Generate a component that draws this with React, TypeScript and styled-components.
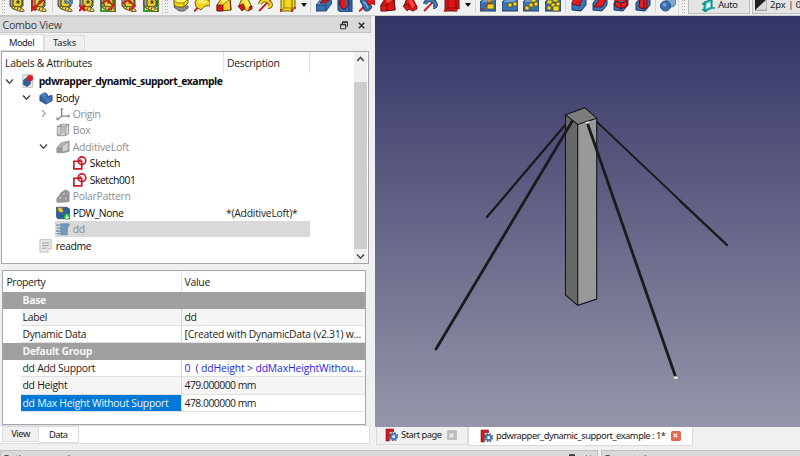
import React from 'react';
import styled, { createGlobalStyle, css } from 'styled-components';

const GlobalStyle = createGlobalStyle`
  * { box-sizing: border-box; }
  body { margin: 0; overflow: hidden; background: #f0f0f0; }
  svg { flex: none; }
`;

/* ---------- shared ---------- */
const Window = styled.div`
  width: 800px;
  height: 456px;
  display: flex;
  flex-direction: column;
  overflow: hidden;
  background: #f0f0f0;
  color: #1c1c24;
  font: 10.4px/16px 'Open Sans', 'Noto Sans', sans-serif;
  white-space: pre;
`;
const Label = styled.span<{ $ls?: number; $bold?: boolean; $color?: string; $size?: number }>`
  letter-spacing: ${(p) => p.$ls ?? -0.26}px;
  font-weight: ${(p) => (p.$bold ? 700 : 400)};
  ${(p) => p.$color && css`color: ${p.$color};`}
  ${(p) => p.$size && css`font-size: ${p.$size}px;`}
`;
const TabLabel = styled(Label)`
  font-family: 'Noto Sans', sans-serif;
  font-size: 9.4px;
  letter-spacing: ${(p) => p.$ls ?? -0.5}px;
`;

/* ---------- toolbar ---------- */
const Toolbar = styled.div`
  flex: none;
  height: 16px;
  display: flex;
  align-items: flex-start;
  overflow: hidden;
  border-bottom: 1px solid #c9c9cc;
  background: #f1f1f1;
`;
const ToolSlot = styled.div`
  flex: none;
  width: 21.4px;
  height: 16px;
  margin-top: -4px;
  display: flex;
  justify-content: center;
`;
const Separator = styled.div<{ $w: number }>`
  flex: none;
  width: ${(p) => p.$w}px;
  height: 13px;
  display: flex;
  justify-content: center;
  &::before { content: ''; width: 1px; background: #d4d4d4; }
`;
const Handle = styled.div<{ $w: number; $first?: boolean }>`
  flex: none;
  width: ${(p) => p.$w}px;
  height: 15px;
  display: flex;
  justify-content: center;
  gap: 1px;
  border-left: ${(p) => (p.$first ? 0 : 1)}px solid #dadada;
  &::before, &::after { content: ''; width: 1px; background: repeating-linear-gradient(#aaa 0 1px, transparent 1px 3px); }
`;
const Arrow = styled.div`
  flex: none;
  width: 10px;
  height: 12px;
  padding: 3px 0 0 2px;
  &::before { content: ''; display: block; width: 0; border: 3px solid transparent; border-top: 4px solid #111; border-bottom: 0; }
`;
const ToolButton = styled.div<{ $w: number }>`
  flex: none;
  width: ${(p) => p.$w}px;
  height: 14px;
  margin-right: 2px;
  display: flex;
  align-items: center;
  gap: 3px;
  padding: 0 0 3px 2px;
  border: 1px solid #bdbdbd;
  border-top: 0;
  background: #e4e4e4;
`;

type IconProps = { main: string; lite: string; dark: string };
const YELLOW = { main: '#f3d51f', lite: '#fff06a', dark: '#5e4d08' };
const RED = { main: '#df1414', lite: '#ff4a3a', dark: '#4a0b10' };
const S = ({ children, w = 16 }: { children: React.ReactNode; w?: number }) => (
  <svg width={w} height={w} viewBox="0 0 16 16">{children}</svg>
);

const Tape = ({ kind }: { kind: string }) => (
  <S>
    {(kind === 'box' || kind === 'toggle') && <path d="M1 0v15h14V0" fill="none" stroke="#3f9a2c" strokeWidth="2.2" />}
    <path d="M1 3 4 0h7l3 3v7l-3 3H5l-4-3z" fill="#a09f94" stroke="#3b3a26" strokeWidth=".9" />
    <path d="M4 4 7 1h4l2 4v4l-3 2H6L4 9z" fill="#e9cf2b" stroke="#3a3610" strokeWidth=".9" />
    <circle cx="9" cy="6" r="1.7" fill="#4b4832" />
    <path d="m3 10 8 1 4 3v1.500h-4l-8-3z" fill="#e8d04a" stroke="#4c461c" strokeWidth=".8" />
    <path d="m6 11-1 2m4-1.500-1 2.500m4-1.500-1 2" stroke="#37330f" strokeWidth=".8" />
    {kind === 'angle' && <path d="M1 0v14L13 3M1 13l4 1" fill="none" stroke="#cc1a14" strokeWidth="2" />}
    {kind === 'refresh' && <path d="M8 3c1 5 6 5 7 0v4l-3 1" fill="none" stroke="#4c83c4" strokeWidth="2.2" />}
    {kind === 'clear' && <path d="m0 9 6 6m0-6-6 6" stroke="#d0131a" strokeWidth="2.2" />}
    {(kind === 'toggle' || kind === 'delta') && <path d="m1 8 6-4 7 6-5 4" fill="none" stroke="#d41c18" strokeWidth="1.8" />}
  </S>
);
const Pad = () => (
  <S>
    <path d="m1 11 5 4h5l4-3v-2H1z" fill="#8e9294" stroke="#454a4c" strokeWidth=".8" />
    <path d="m1 4 4-3h10v6l-4 4H4L1 9z" fill="#f3d51f" stroke="#655109" strokeWidth=".9" />
    <path d="m1 5 3 2h7l4-4M11 7v4" fill="none" stroke="#8f760d" strokeWidth=".8" />
    <path d="m2 4 3-2h9l-3 4H5z" fill="#fff06a" />
  </S>
);
const Revolve = () => (
  <S>
    <path d="m0 15.500 5-5M12 5l4-4" stroke="#d21b18" strokeWidth="1.8" />
    <path d="M1 6c3-4 6-5 9-4l6 3v5c-4-1-7 1-9 4L2 11z" fill="#f3d51f" stroke="#655109" strokeWidth=".9" />
    <path d="m3 6 4-3 7 3-5 2z" fill="#fff06a" />
  </S>
);
const Loft = ({ main, lite, dark }: IconProps) => (
  <S>
    <path d="M1 9 5 3l9-2 1 13-8 .7H1z" fill={main} stroke={dark} strokeWidth="1" />
    <path d="m6 4 8-2-2 4-5 1z" fill={lite} />
    <path d="M1 9h6v6H1zM14 3l1 11" fill="#dc1817" stroke="#68100c" strokeWidth=".8" />
    <path d="m7 9 7-6" stroke={dark} strokeWidth=".7" />
  </S>
);
const Sweep = ({ main, lite, dark }: IconProps) => (
  <S>
    <path d="M2 10 5 2l5-1 5 10-4 4-6-3z" fill={main} stroke={dark} strokeWidth=".9" />
    <path d="m6 3 3-1 4 8-3 2z" fill={lite} />
    <path d="m1 10 5-2 2 4-3 3zM12 11l3-1v3l-4 2" fill="#d71918" stroke="#65110d" strokeWidth=".8" />
  </S>
);
const Helix = ({ main, dark }: IconProps) => (
  <S>
    <path d="m1 15 14-14" stroke="#d21a18" strokeWidth="1.8" />
    <path d="M2 8c1-4 6-5 9-2 3 2 2 5-1 5M6 5c0-4 5-5 8-2" fill="none" stroke={dark} strokeWidth="4" />
    <path d="M2 8c1-4 6-5 9-2 3 2 2 5-1 5M6 5c0-4 5-5 8-2" fill="none" stroke={main} strokeWidth="2.5" />
  </S>
);
const Prim = ({ main, lite, dark }: IconProps) => (
  <S>
    <path d="m1 3 4-3h10v12l-3 3H1z" fill={main} stroke={dark} strokeWidth=".9" />
    <path d="m2 3 3-3h9l-2 3z" fill={lite} />
    <path d="M12 3v12m0-12 3-3" fill="none" stroke={dark} strokeWidth=".8" />
    <path d="M4 0v12m0 0-3 3m3-3h11" stroke={dark} strokeWidth=".6" />
    <path d="M0 13h2v3H0zM11 13h2v3h-2zM14 11h2v2h-2z" fill="#d62b21" />
  </S>
);
const Pocket = () => (
  <S>
    <path d="m0 9 6-7h10v5l-6 8H0z" fill="#3970b0" stroke="#173b67" strokeWidth=".9" />
    <path d="m0 9 6-7h10l-5 7z" fill="#5a92cf" />
    <path d="m4 7 3-3h6l-3 3z" fill="#e21717" stroke="#541019" strokeWidth=".8" />
    <path d="M0 9h10l6-7M10 9v6" fill="none" stroke="#173b67" strokeWidth=".8" />
  </S>
);
const Hole = () => (
  <S>
    <path d="M1 0h12l2 2v14H3l-2-2z" fill="#346eb0" stroke="#163b67" strokeWidth="1" />
    <path d="M12 0v15" stroke="#173b67" />
    <ellipse cx="7" cy="7" rx="4.3" ry="6" fill="#e21717" stroke="#4b1220" />
    <path d="M7 2c3 3 3 7 0 10 5-1 5-9 0-10" fill="#426fa5" />
  </S>
);
const Groove = () => (
  <S>
    <path d="m0 15.500 5-5" stroke="#d51919" strokeWidth="1.8" />
    <path d="M1 5c3-2 7-2 9 1l3 5c-2 4-5 5-8 3-1-4-2-6-4-9z" fill="#346eb0" stroke="#173b67" strokeWidth=".9" />
    <path d="M6 3c3-4 9-3 10 1v5c-3-2-5-1-7 1 0-3-1-5-3-7z" fill="#e51b1b" stroke="#681015" strokeWidth=".7" />
    <path d="M4 6c3 1 4 3 5 6" fill="none" stroke="#84acd7" strokeWidth="1.4" />
  </S>
);
const Pattern = ({ n }: { n: number }) => (
  <S>
    <path d="m0 6 5-4h11v13H0z" fill="#3a72b2" stroke="#193f6d" />
    <path d="m1 6 4-3h10l-3 3z" fill="#72a2d4" />
    {n === 0 && <path d="M7 8h7v5H7zM8 3h4v4H8z" fill="#f3d522" stroke="#59500f" strokeWidth=".8" />}
    {n === 0 && <path d="m2 14 12-12M1 13h3" stroke="#d41c18" strokeDasharray="3 2" strokeWidth="1.4" />}
    {n > 0 && <g fill="#f3d522" stroke="#554b0d" strokeWidth=".7"><rect x="6" y="7" width="4" height="4" rx="1" /><rect x="11" y="6" width="4" height="4" rx="1" /></g>}
    {n > 1 && <g fill="#f3d522" stroke="#554b0d" strokeWidth=".7"><rect x="2" y="10" width="4" height="4" rx="1" /><rect x="8" y="2" width="5" height="4" rx="1" /></g>}
    {n > 2 && <g fill="#f3d522" stroke="#554b0d" strokeWidth=".7"><rect x="8" y="10" width="6" height="5" rx="1" /><rect x="2" y="4" width="5" height="4" rx="1" /></g>}
  </S>
);
const Dress = ({ n }: { n: number }) => (
  <S>
    <path d="m1 7 5-6h9v8l-5 6-9-1z" fill="#3a72b2" stroke="#183b68" />
    {n === 0 && <path d="M1 8c0-4 3-7 6-7l8 1c-4 1-6 4-6 8z" fill="#e51c1b" stroke="#5b101c" strokeWidth=".8" />}
    {n === 1 && <path d="m2 11 6-9h7l-5 9z" fill="#e51c1b" stroke="#5b101c" strokeWidth=".8" />}
    {n === 2 && <path d="m2 4 4-2 8 2v6l-6 3-6-3zM2 5l6 2 6-2M8 7v6" fill="#e51c1b" stroke="#5b101c" />}
    {n === 3 && <path d="M5 2h7v10l-4 1-4-2zM9 2v10" fill="#e51c1b" stroke="#5b101c" />}
  </S>
);
const Bool = () => (
  <S>
    <circle cx="11" cy="6" r="5" fill="#7fa9d4" stroke="#527da9" />
    <circle cx="5.5" cy="10" r="5" fill="#3a70ae" stroke="#244b7d" />
    <circle cx="4.5" cy="8.8" r="2" fill="#6e9dcd" />
  </S>
);

const tools: React.ReactNode[] = [
  <Tape kind="plain" />, <Tape kind="angle" />, 5, <Tape kind="refresh" />, <Tape kind="clear" />,
  <Tape kind="toggle" />, <Tape kind="delta" />, <Tape kind="box" />, 'handle',
  <Pad />, <Revolve />, <Loft {...YELLOW} />, <Sweep {...YELLOW} />, <Helix {...YELLOW} />, <Prim {...YELLOW} />, 'arrow', 4.8,
  <Pocket />, <Hole />, <Groove />, <Loft {...RED} />, <Sweep {...RED} />, <Helix main="#4379b5" lite="#8db4dd" dark="#193c67" />, <Prim {...RED} />, 'arrow', 4.6,
  <Pattern n={0} />, <Pattern n={1} />, <Pattern n={2} />, <Pattern n={3} />, 4.6,
  <Dress n={0} />, <Dress n={1} />, <Dress n={2} />, <Dress n={3} />, 3.6, <Bool />,
];

/* ---------- docks ---------- */
const Main = styled.div`
  flex: none;
  height: 434px;
  display: flex;
`;
const Dock = styled.div`
  flex: none;
  width: 371px;
  display: flex;
  flex-direction: column;
`;
const DockTitle = styled.div`
  flex: none;
  height: 17px;
  display: flex;
  align-items: center;
  padding: 1px 5px 0 2.5px;
  border: 1px solid #c6c6c6;
  border-left: 0;
  background: #d9d9d9;
`;
const Spacer = styled.div`
  flex: 1;
`;
const TitleIcons = styled.div`
  display: flex;
  gap: 10px;
  align-items: center;
`;
const TopTabs = styled.div`
  flex: none;
  height: 18px;
  display: flex;
  align-items: flex-end;
`;
const Tab = styled.div<{ $w: number; $on?: boolean; $h: number }>`
  flex: none;
  width: ${(p) => p.$w}px;
  height: ${(p) => p.$h}px;
  display: flex;
  align-items: center;
  justify-content: center;
  background: ${(p) => (p.$on ? '#fff' : '#f0f0f0')};
  border: 1px solid #dcdcdc;
  border-left-width: ${(p) => (p.$on ? 0 : 1)}px;
`;
const Tree = styled.div`
  flex: none;
  width: 368px;
  height: 213px;
  margin-left: 1px;
  display: flex;
  padding-right: 1px;
  border: 1px solid #a5a5b0;
  background: #fff;
`;
const TreeBody = styled.div`
  flex: 1;
  min-width: 0;
`;
const TreeHead = styled.div`
  height: 20.8px;
  display: flex;
  line-height: 22px;
`;
const HeadCell = styled.div<{ $w: number; $pad: number }>`
  flex: none;
  width: ${(p) => p.$w}px;
  padding-left: ${(p) => p.$pad}px;
  border-right: 1px solid #e2e2e2;
`;
const TreeRow = styled.div<{ $depth: number }>`
  height: 16.48px;
  display: flex;
  align-items: center;
  padding-left: ${(p) => 2 + p.$depth * 17}px;
`;
const Chevron = styled.div`
  flex: none;
  width: 17px;
  display: flex;
  padding-left: 1px;
`;
const RowContent = styled.div<{ $sel?: boolean }>`
  flex: 1;
  height: 100%;
  display: flex;
  align-items: center;
  gap: 3px;
  padding-left: 0.7px;
  margin-right: 44px;
  background: ${(p) => (p.$sel ? '#d9d9d9' : 'transparent')};
`;
const Note = styled.div`
  width: 84px;
  margin-left: auto;
`;
const ScrollBar = styled.div`
  flex: none;
  width: 13px;
  display: flex;
  flex-direction: column;
  background: #f0f0f0;
`;
const ScrollEnd = styled.div<{ $h: number }>`
  height: ${(p) => p.$h}px;
  display: flex;
  justify-content: center;
  padding-top: 3px;
`;
const Thumb = styled.div`
  flex: 1;
  background: #cdcdcd;
`;
const Grid = styled.div`
  flex: none;
  width: 364px;
  height: 155px;
  margin: 6px 0 0 2px;
  border: 1px solid #a5a5b0;
  background: #fff;
`;
const GridHead = styled.div`
  height: 21px;
  display: flex;
  line-height: 22px;
`;
const GroupRow = styled.div`
  height: 17.1px;
  padding-left: 19.5px;
  background: #a0a0a0;
`;
const PropRow = styled.div<{ $alt?: boolean }>`
  height: 17.1px;
  margin-left: 17.5px;
  display: flex;
  border-bottom: 1px solid #e0e0e0;
  background: ${(p) => (p.$alt ? '#f5f5f5' : '#fff')};
`;
const PropName = styled.div<{ $sel?: boolean }>`
  flex: none;
  width: 161.5px;
  padding-left: 2px;
  border-right: 1px solid #d8d8d8;
  ${(p) => p.$sel && css`background: #0078d7; color: #eaf5ff;`}
`;
const PropValue = styled.div`
  padding-left: 2.5px;
`;
const BottomTabs = styled.div`
  flex: none;
  width: 370px;
  height: 19px;
  display: flex;
  padding-left: 2px;
  border: 1px solid #dedede;
  border-left: 0;
  background: #fff;
`;
const Center = styled.div`
  flex: 1;
  margin-left: 4px;
  display: flex;
  flex-direction: column;
`;
const View3D = styled.div`
  flex: none;
  height: 411px;
  background: linear-gradient(#333366, #9696aa);
`;
const DocTabs = styled.div`
  display: flex;
  padding-left: 1px;
`;
const DocTab = styled.div<{ $w: number; $on?: boolean }>`
  width: ${(p) => p.$w}px;
  height: ${(p) => (p.$on ? 18.5 : 17.5)}px;
  display: flex;
  align-items: center;
  gap: 3px;
  padding-left: ${(p) => (p.$on ? 11 : 8)}px;
  border: 1px solid #dadada;
  border-top: 0;
  background: ${(p) => (p.$on ? '#fff' : '#f0f0f0')};
`;
const CloseBox = styled.div<{ $bg: string }>`
  flex: none;
  width: 10px;
  height: 10px;
  margin-left: 2px;
  display: flex;
  align-items: center;
  justify-content: center;
  border-radius: 1.5px;
  background: ${(p) => p.$bg};
`;
const BottomDocks = styled.div`
  flex: none;
  height: 6px;
  display: flex;
  gap: 3px;
  overflow: hidden;
`;
const BottomDock = styled.div<{ $w: number }>`
  flex: none;
  width: ${(p) => p.$w}px;
  height: 17px;
  display: flex;
  padding: 0 5px 0 2.5px;
  border: 1px solid #c2c2c2;
  background: #d9d9d9;
`;

/* ---------- small drawings ---------- */
const FloatIcon = () => (
  <svg width="8" height="9" viewBox="0 0 8 9"><path d="M2.5 3V1.2h5v4H6M.6 3.6h5v4.2h-5z" fill="none" stroke="#333" /><path d="M.2 3.6h5.8M2.2 1h5.6" stroke="#333" strokeWidth="1.5" /></svg>
);
const CrossIcon = ({ c = '#333', s = 7 }: { c?: string; s?: number }) => (
  <svg width={s} height={s} viewBox="0 0 7 7"><path d="m.8.8 5.4 5.4m0-5.4L.8 6.2" stroke={c} strokeWidth="1.6" /></svg>
);
const Chev = ({ dir }: { dir: 'down' | 'right' | 'up' }) => (
  <svg width="9" height="9" viewBox="0 0 9 9">
    <path d={dir === 'down' ? 'm1 2.6 3.5 3.6L8 2.6' : dir === 'up' ? 'm1.2 6 3.3-3.6L7.8 6' : 'M3 1l3.4 3.5L3 8'} fill="none" stroke={dir === 'right' ? '#a3a3a3' : '#484848'} strokeWidth={dir === 'right' ? 1.1 : 1.5} />
  </svg>
);
const Fc = () => (
  <svg width="13" height="14" viewBox="0 0 13 14">
    <path d="M1 1h7.5v2.8H4.3V6h2.5v2.5H4.3V13H1z" fill="#d21b20" stroke="#7d1116" strokeWidth=".6" />
    <circle cx="8.7" cy="8.7" r="3.6" fill="none" stroke="#34618f" strokeWidth="1.8" strokeDasharray="1.6 1.23" />
    <circle cx="8.7" cy="8.7" r="2.4" fill="none" stroke="#4a7db5" strokeWidth="2" />
    <circle cx="8.7" cy="8.7" r="1.1" fill="#f1f4f8" />
  </svg>
);
const treeIcons: Record<string, React.ReactNode> = {
  doc: <><path d="M.8.8h11.500v14.4H.8z" fill="#e9e9e6" stroke="#bdbdbd" /><path d="m1.800 7 3.2-2.500 4.500 1v6l-3.700 2.700-4-2z" fill="#2d609d" stroke="#1b3e6b" strokeWidth=".7" /><circle cx="9" cy="4.800" r="3.600" fill="#d8202b" /></>,
  body: <><path d="m1 5 5-3 3 1 1 3 5-1v6l-7 4-7-4z" fill="#2f659f" stroke="#1b406c" strokeWidth=".8" /><path d="m1 5 5-3 3 2-4 3z" fill="#5085bf" /><path d="m5 7 4-1v3l5-3v5l-6 4V10L5 9z" fill="#4679b2" /></>,
  origin: <><path d="M6.5 1v9.5L1 14.5m5.5-4H16" fill="none" stroke="#858585" strokeWidth="1.5" /><path d="m4.8 3.2 1.7-2 1.6 2M1 11.500v3h3M13.500 8.800l2 1.700-2 1.600" fill="none" stroke="#858585" strokeWidth="1" /></>,
  box: <><path d="m1.500 4 4-2.500h9V12l-3.700 2.500H1.500z" fill="#d5d5d5" stroke="#8b8b8b" /><path d="M1.500 4H11v10.500M11 4l3.500-2.500M5.500 1.500V12l-4 2.500" fill="none" stroke="#858585" /><path d="M5.500 4H11v7.500H5.500z" fill="#bcbcbc" /></>,
  loft: <><path d="M1 9 6 3l9-2v12l-7 1.500H1z" fill="#b4b4b4" stroke="#8d8d8d" strokeWidth=".8" /><path d="M1 8.500h5.800V14H1z" fill="#979797" /><path d="m7 7 7-5v10l-7 2z" fill="#d0d0d0" stroke="#8b8b8b" strokeWidth=".8" /></>,
  sketch: <><path d="M1 6h9v8.700H1zM6.200 6.200l3-2" fill="none" stroke="#c91c28" strokeWidth="1.900" /><circle cx="10.200" cy="5.400" r="4.400" fill="none" stroke="#c91c28" strokeWidth="1.900" /></>,
  polar: <><path d="M1 11 6 4l5-3 4 2v11l-6 1H1z" fill="#9b9b9b" stroke="#858585" strokeWidth=".8" /><path d="m3 10 2-2 2 2-2 2zm4-5 3-2 1 3-3 1zm3 5 3-2v4l-3 1z" fill="#d1d1d1" stroke="#777" strokeWidth=".7" /></>,
  pdw: <><path d="M.5 1.500h12l3 2v11H2l-1.500-2z" fill="#2d609d" stroke="#1f4774" strokeWidth=".8" /><path d="m2 2 4-1 3 5-3 2-4-3z" fill="#e3c43c" stroke="#6f6122" strokeWidth=".7" /><circle cx="12.500" cy="12.300" r="3.500" fill="#24b62b" /><path d="M12.500 9.800v4.500m-2-2 2 2 2-2" stroke="#fff" strokeWidth="1.200" fill="none" /></>,
  dd: <><path d="M5.500 2H15v3h-2v9.500H5.500z" fill="#7298bb" stroke="#557fa5" strokeWidth=".7" /><path d="M0 3.600h5.500M1 7h4.500M0 10.300h5.500m-4.500 3h4.500" stroke="#6a94ba" strokeWidth="1.600" /></>,
  text: <><path d="M1 .8h13v10.500L10.500 15H1z" fill="#e7e7e7" stroke="#bcbcbc" /><path d="M3.500 4.500h8m-8 3h8m-8 3h5" stroke="#9b9b9b" strokeWidth="1.100" /><path d="M10.300 15v-4H14" fill="#fff" stroke="#bbb" /></>,
};
type Node = { d: number; icon: string; text: string; chev?: 'down' | 'right'; dim?: boolean; sel?: boolean; bold?: boolean; ls?: number; note?: string };
const nodes: Node[] = [
  { d: 0, icon: 'doc', text: 'pdwrapper_dynamic_support_example', chev: 'down', bold: true, ls: -0.48 },
  { d: 1, icon: 'body', text: 'Body', chev: 'down' },
  { d: 2, icon: 'origin', text: 'Origin', chev: 'right', dim: true },
  { d: 2, icon: 'box', text: 'Box', dim: true },
  { d: 2, icon: 'loft', text: 'AdditiveLoft', chev: 'down', dim: true, ls: -0.15 },
  { d: 3, icon: 'sketch', text: 'Sketch' },
  { d: 3, icon: 'sketch', text: 'Sketch001', ls: -0.45 },
  { d: 2, icon: 'polar', text: 'PolarPattern', dim: true },
  { d: 2, icon: 'pdw', text: 'PDW_None', note: '*(AdditiveLoft)*', ls: -0.45 },
  { d: 2, icon: 'dd', text: 'dd', dim: true, sel: true },
  { d: 1, icon: 'text', text: 'readme', ls: -0.35 },
];

type Prop = { name: string; value?: string; alt?: boolean; sel?: boolean; blue?: boolean; ls?: number; vls?: number };
const props: Prop[] = [
  { name: 'Base' },
  { name: 'Label', value: 'dd', alt: true },
  { name: 'Dynamic Data', value: '[Created with DynamicData (v2.31) w...', ls: -0.32 },
  { name: 'Default Group' },
  { name: 'dd Add Support', value: '0  ( ddHeight > ddMaxHeightWithou...', blue: true, vls: -0.13 },
  { name: 'dd Height', value: '479.000000 mm', alt: true, vls: -0.52 },
  { name: 'dd Max Height Without Support', value: '478.000000 mm', sel: true, vls: -0.52 },
];

const Scene = () => (
  <svg width="425" height="411" viewBox="375 16 425 411">
    <g stroke="#1b1b1b" strokeLinecap="round">
      <path d="M566 124 487 217" strokeWidth="2.3" />
      <path d="M596 121 727 245" strokeWidth="1.8" />
      <path d="m680 201 47 44" strokeWidth="2.200" />
    </g>
    <path d="m565.500 114.700 12.200 9.800v180.800l-12.200-10.300z" fill="#686868" />
    <path d="m577.700 124.500 19-6.300V299l-19 6.300z" fill="#999" />
    <path d="m565.500 114.700 19.300-7 11.900 10.500-19 6.300z" fill="#7c7c7c" />
    <path d="m565.500 114.700 19.300-7 11.900 10.500-19 6.300zM565.500 115v180l12.200 10.300 19-6.300V118M577.700 124.500v180.800" fill="none" stroke="#171717" strokeWidth="1.100" />
    <g stroke="#1b1b1b" strokeLinecap="round" strokeWidth="2.800">
      <path d="M572 121.500 436 349" />
      <path d="m588 125 87.300 251" />
    </g>
    <path d="m585.500 122.800 4-.8" stroke="#eee" strokeWidth="1.300" />
    <path d="M673.500 376.500h4v2.200h-3z" fill="#fff" />
  </svg>
);

export default function App() {
  return (
    <Window>
      <GlobalStyle />
      <Toolbar>
        <Handle $w={6.8} $first />
        {tools.map((t, i) =>
          typeof t === 'number' ? <Separator key={i} $w={t} />
            : t === 'arrow' ? <Arrow key={i} />
              : t === 'handle' ? <Handle key={i} $w={8.7} />
                : <ToolSlot key={i}>{t}</ToolSlot>)}
        <Handle $w={9.5} />
        <ToolButton $w={62}>
          <Spacer />
          <S w={13}><path d="m3 4 9-3v10l-9 4zM0 6h5m-5 7h4m1 3v-3m7-2h4" fill="#5ccfc6" stroke="#168e91" strokeWidth="2" /><path d="m5.500 6 4.500-1.600v5L5.500 11z" fill="#e9f7f5" /></S>
          <TabLabel $ls={-0.4}>Auto</TabLabel>
          <Spacer />
        </ToolButton>
        <ToolButton $w={62}>
          <S w={12}><path d="M0 0h16v15H0z" fill="#dadada" stroke="#777" /><path d="M0 0h16L0 15z" fill="#222" /></S>
          <TabLabel $ls={0}>2px | 0</TabLabel>
        </ToolButton>
      </Toolbar>

      <Main>
        <Dock>
          <DockTitle>
            <Label $size={10.6} $ls={-0.25} $color="#3c3c3c">Combo View</Label>
            <Spacer />
            <TitleIcons><FloatIcon /><CrossIcon /></TitleIcons>
          </DockTitle>
          <TopTabs>
            <Tab $w={44} $h={17} $on><TabLabel>Model</TabLabel></Tab>
            <Tab $w={41} $h={16}><TabLabel $ls={-0.15}>Tasks</TabLabel></Tab>
          </TopTabs>
          <Tree>
            <TreeBody>
              <TreeHead>
                <HeadCell $w={221.5} $pad={3}><Label>Labels &amp; Attributes</Label></HeadCell>
                <HeadCell $w={86} $pad={3.5}><Label>Description</Label></HeadCell>
              </TreeHead>
              {nodes.map((n) => (
                <TreeRow key={n.text} $depth={n.d}>
                  <Chevron>{n.chev && <Chev dir={n.chev} />}</Chevron>
                  <RowContent $sel={n.sel}>
                    <S w={14}>{treeIcons[n.icon]}</S>
                    <Label $bold={n.bold} $ls={n.ls} $color={n.dim ? '#8d8d8d' : '#0c0c0c'}>{n.text}</Label>
                    {n.note && <Note><Label>{n.note}</Label></Note>}
                  </RowContent>
                </TreeRow>
              ))}
            </TreeBody>
            <ScrollBar>
              <ScrollEnd $h={30}><Chev dir="up" /></ScrollEnd>
              <Thumb />
              <ScrollEnd $h={14}><Chev dir="down" /></ScrollEnd>
            </ScrollBar>
          </Tree>
          <Grid>
            <GridHead>
              <HeadCell $w={179} $pad={3.5}><Label $ls={-0.4}>Property</Label></HeadCell>
              <PropValue><Label>Value</Label></PropValue>
            </GridHead>
            {props.map((p) => p.value === undefined ? (
              <GroupRow key={p.name}><Label $bold $color="#f4f4f4" $ls={-0.3}>{p.name}</Label></GroupRow>
            ) : (
              <PropRow key={p.name} $alt={p.alt}>
                <PropName $sel={p.sel}><Label $ls={p.ls}>{p.name}</Label></PropName>
                <PropValue><Label $ls={p.vls} $color={p.blue ? '#2525f0' : undefined}>{p.value}</Label></PropValue>
              </PropRow>
            ))}
          </Grid>
          <BottomTabs>
            <Tab $w={37} $h={16}><TabLabel>View</TabLabel></Tab>
            <Tab $w={39.5} $h={17} $on><TabLabel>Data</TabLabel></Tab>
          </BottomTabs>
        </Dock>
        <Center>
          <View3D><Scene /></View3D>
          <DocTabs>
            <DocTab $w={92}>
              <Fc />
              <TabLabel>Start page</TabLabel>
              <CloseBox $bg="#bdbdbd"><CrossIcon c="#fff" s={5} /></CloseBox>
            </DocTab>
            <DocTab $w={225} $on>
              <Fc />
              <TabLabel>pdwrapper_dynamic_support_example : 1*</TabLabel>
              <CloseBox $bg="#e0694f"><CrossIcon c="#fff" s={5} /></CloseBox>
            </DocTab>
          </DocTabs>
        </Center>
      </Main>
      <BottomDocks>
        <BottomDock $w={598}>
          <Label $size={10.6} $ls={-0.25} $color="#3c3c3c">Python console</Label>
          <Spacer />
          <TitleIcons><FloatIcon /><CrossIcon /></TitleIcons>
        </BottomDock>
        <BottomDock $w={220}><Label $size={10.6} $ls={-0.25} $color="#3c3c3c">Report view</Label></BottomDock>
      </BottomDocks>
    </Window>
  );
}
